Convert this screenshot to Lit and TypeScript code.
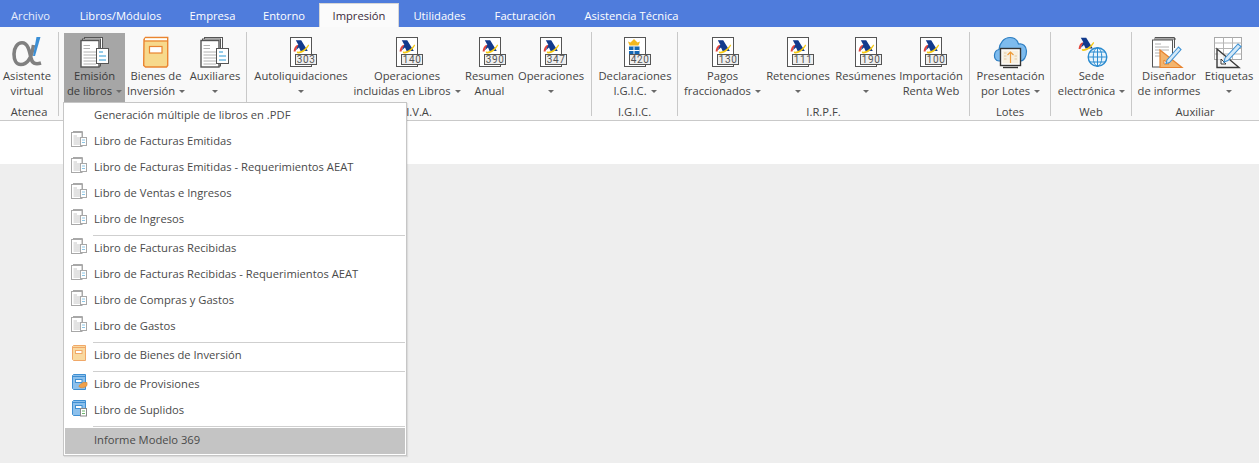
import { LitElement, html, css, svg } from "lit";
import { customElement } from "lit/decorators.js";

const logo = svg`
  <path d="M8.600 15.500C8.800 12.300 10.200 10 12.500 8.800L13.500 10.200C11.800 11.400 10.900 13.100 10.600 15.500Z" fill="#e2463c"/>
  <path d="M10.800 4.200H16.200L22.800 15H15.600L14 11.600L10.800 14.200L13.300 8.800Z" fill="#123a8c"/>
  <path d="M11.800 15.600C16 16.400 20.500 13 23.200 8.600L24.200 9.200C21.800 14 17 18.200 12 17.300Z" fill="#f6c914"/>`;

const aeat = (num: string) => html`<svg class="ico" width="32" height="32" viewBox="0 0 32 32">
  <rect x="5.500" y="1.500" width="21" height="29" fill="#fff" stroke="#555"/>
  ${logo}
  <rect x="10.500" y="18.500" width="21" height="10" fill="#efefef" stroke="#555"/>
  <text x="21.200" y="26.700" text-anchor="middle" font-family="Roboto, sans-serif" font-size="10" letter-spacing="0.7" fill="#555">${num}</text>
</svg>`;

const igic = html`<svg class="ico" width="32" height="32" viewBox="0 0 32 32">
  <rect x="5.500" y="1.500" width="21" height="29" fill="#fff" stroke="#555"/>
  <path d="M10.500 9.500L9 5.500L11.500 6.500L15 3L18.500 6.500L21 5.500L19.500 9.500Z" fill="#f3b81f"/>
  <rect x="10" y="10.500" width="10.500" height="9" fill="#1668b4"/>
  <path d="M10 14.500H20.500M15 10.500V19.500" stroke="#fff" stroke-width="1"/>
  <rect x="10.500" y="18.500" width="21" height="10" fill="#efefef" stroke="#555"/>
  <text x="21.200" y="26.700" text-anchor="middle" font-family="Roboto, sans-serif" font-size="10" letter-spacing="0.7" fill="#555">420</text>
</svg>`;

const alpha = html`<svg class="ico" width="32" height="32" viewBox="0 0 32 32">
  <path d="M22.500 9C21 20 17 28.500 9.800 28.500C5 28.500 3 23.500 3 18C3 11.500 6.500 6.800 11 6.800C17 6.800 18.500 15 20 22C21 27 24 28.800 30 27" fill="none" stroke="#808080" stroke-width="3.600"/>
  <path d="M25.500 1H29.500L24 20H22Z" fill="#3b8fd6"/>
</svg>`;

const stack = (blue = "#2b9ad6") => html`<svg class="ico" width="32" height="32" viewBox="0 0 32 32">
  <rect x="5.500" y="1.500" width="18" height="26" fill="#fff" stroke="#555"/>
  <rect x="3.500" y="3" width="18" height="27" fill="#fff" stroke="#555"/>
  <rect x="2" y="4.500" width="18" height="26.500" fill="#fff" stroke="#555" stroke-width="1.400"/>
  <path d="M4.500 9.500H11M4.500 12.500H11M4.500 16H17M4.500 19H17M4.500 22H17M4.500 25H17M4.500 28H17" stroke="#b2b2b2"/>
  <rect x="17.500" y="12.500" width="12" height="15" fill="#fff" stroke="#555"/>
  <path d="M20 16H24M20 20H27M20 24H27" stroke="${blue}" stroke-width="1.200"/>
</svg>`;

const book = html`<svg class="ico" width="32" height="32" viewBox="0 0 32 32">
  <path d="M4 3.500L5.500 1.500H27.700V29.500L26.500 31H5.500L3.700 29.500Z" fill="#f7d98c" stroke="#ea8430" stroke-width="1.400"/>
  <rect x="5" y="2.300" width="22" height="2.200" fill="#fff"/>
  <path d="M4 5H28" stroke="#ea8430" stroke-width="1.200"/>
  <rect x="9.500" y="10.500" width="12.500" height="6.500" fill="#fff" stroke="#ea8430" stroke-width="1.200"/>
</svg>`;

const cloud = html`<svg class="ico" width="36" height="34" viewBox="0 0 36 34">
  <path d="M6 25C2.500 25 1.300 21.500 1.500 19C1.700 16 3.500 14 6 13.500C6.500 7 11 1.500 17 1.500C21.500 1.500 24.500 4.500 25.500 8C29.500 7 33.500 10 33.500 15C33.500 20.500 31 25 27 25Z" fill="#7dbbee" stroke="#2f7fc2" stroke-width="1.200"/>
  <rect x="7.500" y="12.500" width="20" height="17" fill="#fff" stroke="#333" stroke-width="1.400"/>
  <rect x="9.500" y="14.500" width="16" height="13" fill="#f7f0e2"/>
  <path d="M17.500 27V16M14.500 19L17.500 16L20.500 19" fill="none" stroke="#ee9c3b" stroke-width="1.200"/>
  <path d="M11 17H13.500M11 20H13.500M11 23H13.500M21.500 20H24M21.500 23H24" stroke="#e3c8a0"/>
  <path d="M10 31.500H25" stroke="#333" stroke-width="1.400"/>
</svg>`;

const sede = html`<svg class="ico" width="36" height="34" viewBox="0 0 36 34">
  <g transform="translate(-4 -2.500)">${logo}</g>
  <circle cx="23.500" cy="21" r="9.300" fill="#e8f4fc" stroke="#2a8bd0" stroke-width="1.400"/>
  <ellipse cx="23.500" cy="21" rx="4.300" ry="9.300" fill="none" stroke="#2a8bd0"/>
  <path d="M23.500 11.500V30.500M14.500 21H32.500M15.500 16H31.500M15.500 26H31.500" stroke="#2a8bd0"/>
</svg>`;

const designer = html`<svg class="ico" width="36" height="34" viewBox="0 0 36 34">
  <path d="M4 2V1.500H23.500V12M3 3H25" fill="none" stroke="#555"/>
  <rect x="1.500" y="4" width="20" height="27" fill="#fff" stroke="#555"/>
  <path d="M4 8H10M4 11H18M4 14H18M4 17H12M4 20H10" stroke="#b2b2b2"/>
  <path d="M9 14V31.500H31Z" fill="#f3b46d" stroke="#e7832f" stroke-width="1.200"/>
  <path d="M13 24V28H18Z" fill="#fff" stroke="#e7832f"/>
  <path d="M16 24L27.500 11L30 13.500L18.500 26.500L15 27.500Z" fill="#d5e9f8" stroke="#3f92d4" stroke-width="1.100"/>
</svg>`;

const labels = html`<svg class="ico" width="36" height="34" viewBox="0 0 36 34">
  <rect x="3.500" y="1.500" width="27" height="22" fill="#fff" stroke="#a9a9a9"/>
  <path d="M3.500 7H30.500M3.500 12.500H30.500M3.500 18H30.500M12.500 1.500V23.500M21.500 1.500V23.500" stroke="#b5b5b5"/>
  <path d="M6 13V31.500H28Z" fill="#f4f4f4" fill-opacity=".75" stroke="#3a3a3a" stroke-width="1.400"/>
  <path d="M10 23V28H15Z" fill="#fff" stroke="#3a3a3a"/>
  <path d="M14 22L27 8L30 10.500L17 24.500L13 26Z" fill="#d5e9f8" stroke="#3f92d4" stroke-width="1.100"/>
</svg>`;

const miniStack = html`<svg class="mico" width="18" height="18" viewBox="0 0 18 18">
  <path d="M3 1.500H12.500V9" fill="none" stroke="#a8a8a8"/>
  <rect x="1.500" y="2.500" width="10.500" height="14" fill="#fff" stroke="#a8a8a8"/>
  <path d="M3.500 6H7M3.500 8H10M3.500 10H10M3.500 12H10M3.500 14H10" stroke="#c6c6c6"/>
  <rect x="10.500" y="7.500" width="6" height="8" fill="#fff" stroke="#a8a8a8"/>
  <path d="M12 10H15M12 12.500H15" stroke="#8cc6e6"/>
</svg>`;

const miniBook = (fill: string, line: string, extra: unknown = "") => html`<svg class="mico" width="18" height="18" viewBox="0 0 18 18">
  <path d="M2.500 2.500L3.500 1.500H15.500V16.500H3.500L2.500 15.500Z" fill="${fill}" stroke="${line}"/>
  <path d="M3 3.500H15" stroke="${line}"/>
  <rect x="5.500" y="6.500" width="6.500" height="3" fill="#fff" stroke="${line}"/>
  ${extra}
</svg>`;

const prov = svg`<path d="M9 13.500C9 11 12 11 13 9.500L17 9.500V12.500C15 15 10 15.500 9 13.500Z" fill="#f0a04b" stroke="#d98a35" stroke-width=".7"/>`;
const supl = svg`<rect x="10.500" y="9.500" width="6" height="7.500" fill="#fff" stroke="#888"/><path d="M12 12H15M12 14.500H15" stroke="#6bb66b"/>`;

type Btn = { l1: string; l2?: string; w: number; caret?: boolean; icon: unknown; hot?: boolean };
type Group = { label: string; w: number; pad?: number; btns: Btn[] };

const groups: Group[] = [
  { label: "Atenea", w: 59, pad: 0, btns: [{ l1: "Asistente", l2: "virtual", w: 54, icon: alpha }] },
  { label: "", w: 188, btns: [
    { l1: "Emisión", l2: "de libros", w: 61, caret: true, icon: stack(), hot: true },
    { l1: "Bienes de", l2: "Inversión", w: 62, caret: true, icon: book },
    { l1: "Auxiliares", w: 56, caret: true, icon: stack() },
  ] },
  { label: "I.V.A.", w: 345, btns: [
    { l1: "Autoliquidaciones", w: 98, caret: true, icon: aeat("303") },
    { l1: "Operaciones", l2: "incluidas en Libros", w: 114, caret: true, icon: aeat("140") },
    { l1: "Resumen", l2: "Anual", w: 51, icon: aeat("390") },
    { l1: "Operaciones", w: 72, caret: true, icon: aeat("347") },
  ] },
  { label: "I.G.I.C.", w: 86, btns: [{ l1: "Declaraciones", l2: "I.G.I.C.", w: 76, caret: true, icon: igic }] },
  { label: "I.R.P.F.", w: 292, btns: [
    { l1: "Pagos", l2: "fraccionados", w: 79, caret: true, icon: aeat("130") },
    { l1: "Retenciones", w: 72, caret: true, icon: aeat("111") },
    { l1: "Resúmenes", w: 63, caret: true, icon: aeat("190") },
    { l1: "Importación", l2: "Renta Web", w: 68, icon: aeat("100") },
  ] },
  { label: "Lotes", w: 81, btns: [{ l1: "Presentación", l2: "por Lotes", w: 71, caret: true, icon: cloud }] },
  { label: "Web", w: 81, btns: [{ l1: "Sede", l2: "electrónica", w: 71, caret: true, icon: sede }] },
  { label: "Auxiliar", w: 127, btns: [
    { l1: "Diseñador", l2: "de informes", w: 64, icon: designer },
    { l1: "Etiquetas", w: 56, caret: true, icon: labels },
  ] },
];

const tabs = [
  { t: "Archivo", w: 65 }, { t: "Libros/Módulos", w: 111 }, { t: "Empresa", w: 73 }, { t: "Entorno", w: 70 },
  { t: "Impresión", w: 80, active: true }, { t: "Utilidades", w: 81 }, { t: "Facturación", w: 90 }, { t: "Asistencia Técnica", w: 123 },
];

type Row = { t?: string; icon?: unknown; sep?: boolean; hot?: boolean };
const sb = miniBook("#f9d9a0", "#f0a868");
const menu: Row[] = [
  { t: "Generación múltiple de libros en .PDF" },
  { t: "Libro de Facturas Emitidas", icon: miniStack },
  { t: "Libro de Facturas Emitidas - Requerimientos AEAT", icon: miniStack },
  { t: "Libro de Ventas e Ingresos", icon: miniStack },
  { t: "Libro de Ingresos", icon: miniStack },
  { sep: true },
  { t: "Libro de Facturas Recibidas", icon: miniStack },
  { t: "Libro de Facturas Recibidas - Requerimientos AEAT", icon: miniStack },
  { t: "Libro de Compras y Gastos", icon: miniStack },
  { t: "Libro de Gastos", icon: miniStack },
  { sep: true },
  { t: "Libro de Bienes de Inversión", icon: sb },
  { sep: true },
  { t: "Libro de Provisiones", icon: miniBook("#8cc0ec", "#3f8fd2", prov) },
  { t: "Libro de Suplidos", icon: miniBook("#8cc0ec", "#3f8fd2", supl) },
  { sep: true },
  { t: "Informe Modelo 369", hot: true },
];

@customElement("app-root")
export class AppRoot extends LitElement {
  static styles = css`
    :host { display: flex; flex-direction: column; position: relative; height: 463px; overflow: hidden;
      font-family: "Open Sans", "Noto Sans", sans-serif; font-size: 11.2px; color: #444; background: #eeeeee; }
    .tabs { display: flex; height: 27px; background: #4f7cdc; flex: none; align-items: flex-end; }
    .tab { height: 24px; line-height: 25px; text-align: center; color: #fff; white-space: nowrap; box-sizing: border-box; }
    .tab.first { color: #e8eefb; text-align: left; padding-left: 11px; }
    .tab.active { background: #fbfbfb; color: #3a2a3a; border: 1px solid #d6d6d6; border-bottom: none; line-height: 23px; }
    .ribbon { display: flex; flex: none; height: 93px; background: #f9f9f9; border-bottom: 1px solid #c9c9c9; }
    .group { display: flex; flex-direction: column; box-sizing: border-box; position: relative; flex: none; padding-left: 5px; padding-top: 6px; }
    .group.nopad { padding-left: 0; }
    .group::after { content: ""; position: absolute; right: 0; top: 5px; bottom: 4px; width: 1px; background: #c9c9c9; }
    .group:last-child::after { display: none; }
    .btns { display: flex; height: 69px; flex: none; }
    .btn { display: flex; flex-direction: column; align-items: center; flex: none; box-sizing: border-box; }
    .btn.hot { background: #a6a6a6; color: #3a3a3a; }
    .iconbox { height: 35px; flex: none; display: flex; justify-content: center; padding-top: 3px; box-sizing: border-box; }
    .ico { display: block; }
    .line { height: 15px; line-height: 15px; white-space: nowrap; text-align: center; display: flex; align-items: center; justify-content: center; gap: 4px; }
    .caret { display: inline-block; width: 0; height: 0; border-left: 3px solid transparent; border-right: 3px solid transparent; border-top: 3px solid #6a6a6a; margin-top: 1px; }
    .glabel { height: 16px; line-height: 16px; margin-top: 2px; text-align: center; white-space: nowrap; margin-left: -5px; padding-right: 1px; }
    .nopad .glabel { margin-left: 0; }
    .white { height: 43px; background: #fff; flex: none; }
    .rest { flex: 1; }
    .menu { position: absolute; left: 63px; top: 102px; width: 344px; height: 354px; box-sizing: border-box; background: #fff; border: 1px solid #c6c6c6; padding: 1px; box-shadow: 1px 1px 1px rgba(0,0,0,.08); }
    .row { height: 26px; box-sizing: border-box; padding-bottom: 6px; display: flex; align-items: center; position: relative; padding-left: 29px; white-space: nowrap; color: #4a4a4a; }
    .row.hot { background: #c4c4c4; padding-bottom: 4px; }
    .mico { position: absolute; left: 5px; top: 0; }
    .sep { height: 3px; margin-left: 28px; box-sizing: border-box; padding-top: 1px; }
    .sep::before { content: ""; display: block; height: 1px; background: #cfcfcf; }
  `;

  private line(text: string, caret: boolean) {
    return html`<div class="line"><span>${text}</span>${caret ? html`<i class="caret"></i>` : ""}</div>`;
  }

  render() {
    return html`
      <div class="tabs">
        ${tabs.map((t, i) => html`<div class="tab ${t.active ? "active" : ""} ${i === 0 ? "first" : ""}" style="width:${t.w}px">${t.t}</div>`)}
      </div>
      <div class="ribbon">
        ${groups.map((g) => html`<div class="group ${g.pad === 0 ? "nopad" : ""}" style="width:${g.w}px">
          <div class="btns">
            ${g.btns.map((b) => html`<div class="btn ${b.hot ? "hot" : ""}" style="width:${b.w}px">
              <div class="iconbox">${b.icon}</div>
              ${this.line(b.l1, false)}
              ${b.l2 ? this.line(b.l2, !!b.caret) : b.caret ? html`<div class="line"><i class="caret"></i></div>` : ""}
            </div>`)}
          </div>
          <div class="glabel">${g.label}</div>
        </div>`)}
      </div>
      <div class="white"></div>
      <div class="rest"></div>
      <div class="menu">
        ${menu.map((r) => r.sep ? html`<div class="sep"></div>` : html`<div class="row ${r.hot ? "hot" : ""}">${r.icon ?? ""}<span>${r.t}</span></div>`)}
      </div>
    `;
  }
}
